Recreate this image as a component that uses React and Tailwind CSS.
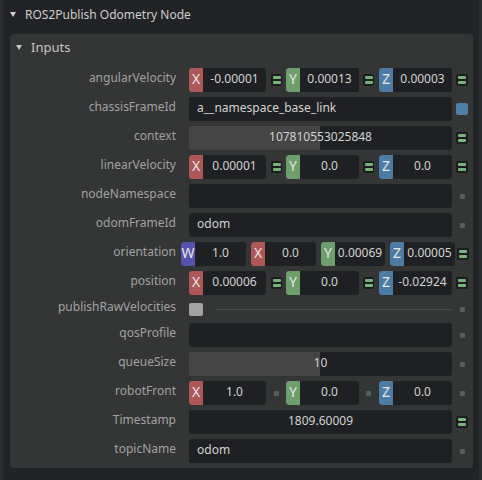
import React from "react";

const FIELD = "bg-[#1f2023]";

function Eq() {
  return (
    <div className="w-[12px] h-[12px] rounded-[2px] bg-[#1c1d1f] flex flex-col items-center justify-center gap-[2px]">
      <div className="w-[8px] h-[3px] rounded-[1px] bg-[#78b27b]" />
      <div className="w-[8px] h-[3px] rounded-[1px] bg-[#78b27b]" />
    </div>
  );
}

function Dot() {
  return <div className="w-[5px] h-[5px] rounded-[1px] bg-[#5a5b5c]" />;
}

function Blue() {
  return <div className="w-[12px] h-[12px] rounded-[2px] bg-[#4f7fa9]" />;
}

const COLORS = {
  X: "bg-[#ad5757]",
  Y: "bg-[#6d9e6c]",
  Z: "bg-[#4c7ca6]",
  W: "bg-[#5752ad]",
};

function Comp({ axis, value, w }) {
  return (
    <div className={`flex h-[24px] rounded-[3px] overflow-hidden ${FIELD} ${w}`}>
      <div className={`w-[14px] flex items-center justify-center pb-[2px] text-[14px] leading-[16px] text-[#e6e6e6] ${COLORS[axis]}`}>
        {axis}
      </div>
      <div className="flex-1 flex items-center justify-center pb-[2px] text-[#d2d2d2]">{value}</div>
    </div>
  );
}

function Vec3({ vals, sep }) {
  const S = sep === "eq" ? Eq : Dot;
  return (
    <div className="flex items-center h-[24px] w-[263px]">
      <Comp axis="X" value={vals[0]} w="w-[77px]" />
      <div className="ml-[5px] w-[11px] flex justify-center"><S /></div>
      <div className="ml-[4px]"><Comp axis="Y" value={vals[1]} w="w-[73px]" /></div>
      <div className="ml-[4px] w-[11px] flex justify-center"><S /></div>
      <div className="ml-[5px]"><Comp axis="Z" value={vals[2]} w="w-[73px]" /></div>
    </div>
  );
}

function Label({ children }) {
  return <div className="w-[166px] text-right text-[#a2a2a2] shrink-0 pb-[5px]">{children}</div>;
}

function Row({ label, children, icon, h = "h-[24px]" }) {
  return (
    <div className={`flex items-center ${h}`}>
      <Label>{label}</Label>
      <div className="ml-[13px] flex items-center">{children}</div>
      <div className="ml-[4px] w-[12px] flex justify-center">{icon}</div>
    </div>
  );
}

function Text({ value }) {
  return (
    <div className={`w-[263px] h-[24px] rounded-[3px] ${FIELD} flex items-center px-[8px] pb-[2px] text-[#d2d2d2]`}>
      {value}
    </div>
  );
}

function Slider({ value }) {
  return (
    <div className="w-[263px] h-[24px] rounded-[3px] bg-[linear-gradient(to_right,#454545_131px,#1f2023_131px)] flex items-center justify-center pb-[2px] text-[#d2d2d2]">
      {value}
    </div>
  );
}

export default function App() {
  return (
    <div
      className="w-[482px] h-[480px] bg-[#222326] relative overflow-hidden text-[12px]"
      style={{ fontFamily: '"Noto Sans", sans-serif' }}
    >
      <div className="absolute left-0 top-0 bottom-0 w-[3px] bg-[#2b2c2e]" />
      <div className="absolute right-0 top-0 bottom-0 w-[3px] bg-[#2b2c2e]" />
      <div className="h-[34px] flex items-center pl-[10px] pb-[5px] text-[#cdcdcd] text-[12px]">
        <svg width="6" height="5" viewBox="0 0 6 5" className="mr-[9px]">
          <polygon points="0,0 6,0 3,5" fill="#d0d0d0" />
        </svg>
        <span>ROS2Publish Odometry Node</span>
      </div>
      <div className="ml-[10px] w-[463px] h-[434px] rounded-[4px] bg-[#343535]">
        <div className="h-[29px] flex items-center pl-[6px] pb-[2px] text-[13px] text-[#c6c6c6]">
          <svg width="6" height="5" viewBox="0 0 6 5" className="mr-[9px]">
            <polygon points="0,0 6,0 3,5" fill="#c8c8c8" />
          </svg>
          <span>Inputs</span>
        </div>
        <div className="mt-[5px] flex flex-col gap-[5px]">
          <Row label="angularVelocity" icon={<Eq />}>
            <Vec3 vals={["-0.00001", "0.00013", "0.00003"]} sep="eq" />
          </Row>
          <Row label="chassisFrameId" icon={<Blue />}>
            <Text value="a__namespace_base_link" />
          </Row>
          <Row label="context" icon={<Eq />}>
            <Slider value="107810553025848" />
          </Row>
          <Row label="linearVelocity" icon={<Eq />}>
            <Vec3 vals={["0.00001", "0.0", "0.0"]} sep="eq" />
          </Row>
          <Row label="nodeNamespace" icon={<Dot />}>
            <Text value="" />
          </Row>
          <Row label="odomFrameId" icon={<Dot />}>
            <Text value="odom" />
          </Row>
          <div className="flex items-center h-[24px]">
            <Label>orientation</Label>
            <div className="ml-[5px] flex items-center gap-[5px]">
              <Comp axis="W" value="1.0" w="w-[65px]" />
              <Comp axis="X" value="0.0" w="w-[65px]" />
              <Comp axis="Y" value="0.00069" w="w-[64px]" />
              <Comp axis="Z" value="0.00005" w="w-[65px]" />
            </div>
            <div className="ml-[2px] w-[12px] flex justify-center"><Eq /></div>
          </div>
          <Row label="position" icon={<Eq />}>
            <Vec3 vals={["0.00006", "0.0", "-0.02924"]} sep="eq" />
          </Row>
          <Row label="publishRawVelocities" icon={<Dot />} h="h-[18px]">
            <div className="w-[263px] flex items-center">
              <div className="w-[14px] h-[13px] rounded-[2px] bg-[#a3a3a3]" />
              <div className="ml-[13px] flex-1 h-px bg-[#4b4c4d]" />
            </div>
          </Row>
          <Row label="qosProfile" icon={<Dot />}>
            <Text value="" />
          </Row>
          <Row label="queueSize" icon={<Dot />}>
            <Slider value="10" />
          </Row>
          <Row label="robotFront" icon={<Dot />}>
            <Vec3 vals={["1.0", "0.0", "0.0"]} sep="dot" />
          </Row>
          <Row label="Timestamp" icon={<Eq />}>
            <div className={`w-[263px] h-[24px] rounded-[3px] ${FIELD} flex items-center justify-center pb-[2px] text-[#d2d2d2]`}>
              1809.60009
            </div>
          </Row>
          <Row label="topicName" icon={<Dot />}>
            <Text value="odom" />
          </Row>
        </div>
      </div>
    </div>
  );
}
